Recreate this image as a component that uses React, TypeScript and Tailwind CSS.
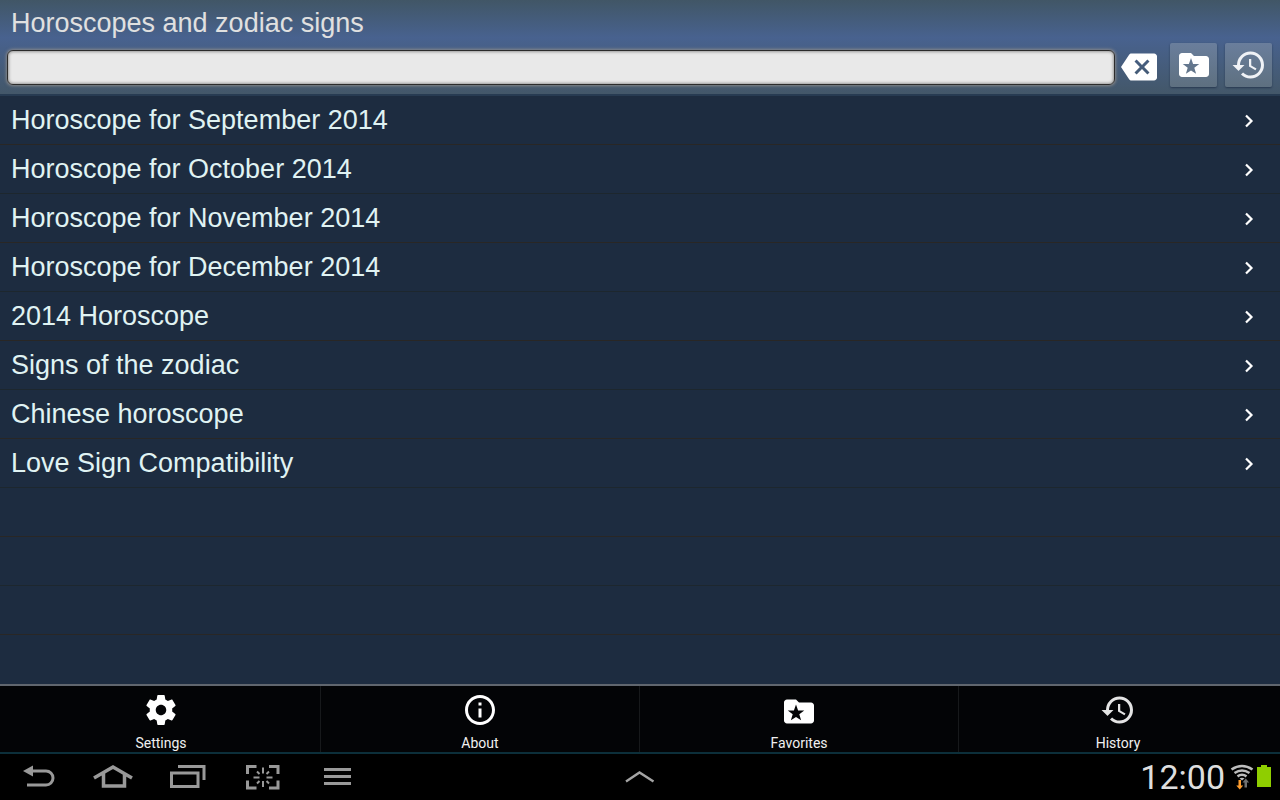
import { MdBackspace, MdHistory, MdInfoOutline } from "react-icons/md";

const ITEMS = [
    "Horoscope for September 2014",
    "Horoscope for October 2014",
    "Horoscope for November 2014",
    "Horoscope for December 2014",
    "2014 Horoscope",
    "Signs of the zodiac",
    "Chinese horoscope",
    "Love Sign Compatibility",
];

function FolderStar({ viewBox = "0 0 24 24" }: { viewBox?: string }) {
    return (
        <svg viewBox={viewBox} fill="currentColor" className="size-9" aria-hidden="true">
            <path
                fillRule="evenodd"
                d="M10 4H4c-1.1 0-2 .9-2 2v12c0 1.1.9 2 2 2h16c1.1 0 2-.9 2-2V8c0-1.1-.9-2-2-2h-8l-2-2zM10 7.4l1.4 3.900 4.100.1-3.300 2.500 1.200 4-3.400-2.300-3.400 2.300 1.200-4-3.300-2.500 4.100-.1z"
            />
        </svg>
    );
}

function Gear() {
    return (
        <svg viewBox="0 0 24 24" fill="currentColor" className="size-9" aria-hidden="true">
            <path d="M19.43 12.98c.04-.32.07-.64.07-.98s-.03-.66-.07-.98l2.11-1.65c.19-.15.24-.42.12-.64l-2-3.46c-.12-.22-.39-.3-.61-.22l-2.49 1c-.52-.4-1.08-.73-1.69-.98l-.38-2.65C14.46 2.18 14.25 2 14 2h-4c-.25 0-.46.18-.49.42l-.38 2.65c-.61.25-1.17.59-1.69.98l-2.49-1c-.23-.09-.49 0-.61.22l-2 3.46c-.13.22-.07.49.12.64l2.11 1.65c-.04.32-.07.65-.07.98s.03.66.07.98l-2.11 1.65c-.19.15-.24.42-.12.64l2 3.46c.12.22.39.3.61.22l2.49-1c.52.4 1.08.73 1.69.98l.38 2.65c.03.24.24.42.49.42h4c.25 0 .46-.18.49-.42l.38-2.65c.61-.25 1.17-.59 1.69-.98l2.49 1c.23.09.49 0 .61-.22l2-3.46c.12-.22.07-.49-.12-.64l-2.11-1.65zM12 15.500c-1.93 0-3.500-1.570-3.500-3.500s1.570-3.500 3.500-3.500 3.500 1.570 3.500 3.500-1.570 3.500-3.500 3.500z" />
        </svg>
    );
}

const MENU = [
    { label: "Settings", icon: <Gear /> },
    { label: "About", icon: <MdInfoOutline className="size-9" /> },
    { label: "Favorites", icon: <FolderStar viewBox="0 -1 24 24" /> },
    { label: "History", icon: <MdHistory className="size-9 text-[#e4e4e4]" /> },
];

function Header() {
    const toolButton =
        "flex h-11 w-[47px] items-center justify-center rounded-xs bg-linear-to-b from-[#6a7e9c] to-[#5e7080] text-white shadow-[0_1px_2px_rgba(20,35,60,0.6)]";

    return (
        <header className="border-b-2 border-[#273b52] bg-linear-to-b from-[#415666] via-[#48628f] via-40% to-[#435769] pr-2 pb-[7px] pl-[7px]">
            <h1 className="h-[43px] px-1 text-[27px] leading-[46px] text-[#e0e0e0]">Horoscopes and zodiac signs</h1>
            <div className="flex items-end">
                <input
                    type="search"
                    aria-label="Search"
                    className="mb-0.5 h-[35px] min-w-0 flex-1 rounded-md border border-[#2c2c2c] bg-[#e9e9e9] px-2 text-xl text-black shadow-[0_0_3px_1px_rgba(150,145,140,0.8),inset_0_0_3px_1px_rgba(0,0,0,0.35)] outline-none"
                />
                <button type="button" aria-label="Clear" className="mr-[13px] mb-0.5 ml-1.5 text-white">
                    <MdBackspace className="size-9" />
                </button>
                <div className="flex gap-2">
                    <button type="button" aria-label="Favorites" className={toolButton}>
                        <FolderStar />
                    </button>
                    <button type="button" aria-label="History" className={toolButton}>
                        <MdHistory className="size-9 text-[#f0f2f6]" />
                    </button>
                </div>
            </div>
        </header>
    );
}

function SystemBar() {
    const navButton = "flex w-[75px] items-center justify-center";

    return (
        <footer className="flex h-[46px] items-stretch bg-black text-[#999999]">
            <div className="flex flex-1">
                <button type="button" aria-label="Back" className={navButton}>
                    <svg viewBox="0 0 36 30" className="h-[30px] w-9">
                        <path d="M11 9h15a7 7 0 0 1 0 14H7" fill="none" stroke="currentColor" strokeWidth="3" />
                        <path d="M3 9l10-5.500v11z" fill="currentColor" />
                    </svg>
                </button>
                <button type="button" aria-label="Home" className={navButton}>
                    <svg viewBox="0 0 40 30" className="h-[30px] w-10" fill="none" stroke="currentColor" strokeWidth="3.5">
                        <path d="M1 16L20 5l19 11M10.500 10.500V24h21V10.500" />
                    </svg>
                </button>
                <button type="button" aria-label="Recent apps" className={navButton}>
                    <svg viewBox="0 0 36 30" className="h-[30px] w-9" fill="none" stroke="currentColor" strokeWidth="3">
                        <path d="M1.500 11H28v13.500H1.500zM8 4.500h26V18" />
                    </svg>
                </button>
                <button type="button" aria-label="Screenshot" className={navButton}>
                    <svg viewBox="0 0 34 30" className="h-[30px] w-[34px]" fill="none" stroke="currentColor">
                        <path
                            strokeWidth="3"
                            d="M1.500 12V4.500h9M23 4.500h9V12M32 18.500V26h-9M10.500 26h-9v-7.500"
                        />
                        <path
                            strokeWidth="2"
                            d="M17 5.500v6M17 19v6M7.500 15.500h6M20.500 15.500h6M11 9.500l2.500 2.500M23 9.500L20.500 12M11 21.500l2.500-2.500M23 21.500L20.500 19"
                        />
                    </svg>
                </button>
                <button type="button" aria-label="Menu" className={navButton}>
                    <svg viewBox="0 0 28 30" className="h-[30px] w-7" fill="currentColor">
                        <path d="M0 6h27v3H0zM0 13h27v3H0zM0 20h27v3H0z" />
                    </svg>
                </button>
            </div>
            <button type="button" aria-label="Show tray">
                <svg viewBox="0 0 30 14" className="h-3.5 w-[30px]" fill="none" stroke="#a4a4a4" strokeWidth="2.4">
                    <path d="M1 11.500L14.500 2.500l14 9" />
                </svg>
            </button>
            <div className="flex flex-1 items-center justify-end">
                <time className="font-[Roboto,sans-serif] text-[34px] leading-10 text-[#dedede]">12:00</time>
                <svg viewBox="0 0 24 26" className="ml-[5px] h-[26px] w-6" fill="none" aria-hidden="true">
                    <g stroke="#bdbdbd" strokeWidth="2.6">
                        <path d="M1.500 5.500Q12-1.500 22.500 5.500" />
                        <path d="M4.500 9Q12 4 19.500 9" />
                        <path d="M7.500 12.300Q12 9.300 16.500 12.300" />
                    </g>
                    <path d="M9.500 14.500q2.500-1.500 5 0L12 16.500z" fill="#bdbdbd" />
                    <path d="M8.500 16h2.500v5.500h2.200L9.750 25.500l-3.500-4h2.250z" fill="#ff9d2e" />
                    <path d="M14.500 23.500v-5h-2l3.300-4 3.300 4H17v5z" fill="#707070" />
                </svg>
                <svg viewBox="0 0 14 22" className="mr-[9px] mb-0.5 ml-[3px] h-[22px] w-3.5" aria-hidden="true">
                    <path d="M0 2h4V0h6v2h4v20H0z" fill="#8fce00" />
                </svg>
            </div>
        </footer>
    );
}

export default function App() {
    return (
        <div className="flex min-h-screen flex-col bg-black font-['Liberation_Sans',Arial,sans-serif]">
            <Header />

            <main className="flex-1 bg-[#1d2c40]">
                <ul>
                    {ITEMS.map((item) => (
                        <li key={item} className="border-b border-[#292725] even:border-[#1d272e]">
                            <a
                                href="#"
                                className="flex h-12 items-center justify-between pr-[19px] pl-[11px] text-[27px] leading-8 text-[#e0f3f3]"
                            >
                                {item}
                                <svg
                                    viewBox="0 0 24 24"
                                    className="size-6 text-white"
                                    fill="none"
                                    stroke="currentColor"
                                    strokeWidth="2.2"
                                    aria-hidden="true"
                                >
                                    <path d="M9 7.500l5.500 5.500L9 18.500" />
                                </svg>
                            </a>
                        </li>
                    ))}
                    {/* blank rows fill the rest of the list */}
                    {[0, 1, 2].map((row) => (
                        <li key={row} className="h-[49px] border-b odd:border-[#292725] even:border-[#1d272e]" />
                    ))}
                </ul>
            </main>

            <nav className="flex border-t-2 border-b-2 border-t-[#60666e] border-b-[#0c2f3a] bg-[#030406] px-0.5 font-[Roboto,sans-serif]">
                {MENU.map(({ label, icon }) => (
                    <button
                        key={label}
                        type="button"
                        className="flex h-[66px] flex-1 flex-col items-center border-r border-[#17191b] pt-1.5 text-sm leading-[30px] text-[#f0f0f0] last:border-transparent"
                    >
                        <span className="text-white">{icon}</span>
                        {label}
                    </button>
                ))}
            </nav>

            <SystemBar />
        </div>
    );
}
